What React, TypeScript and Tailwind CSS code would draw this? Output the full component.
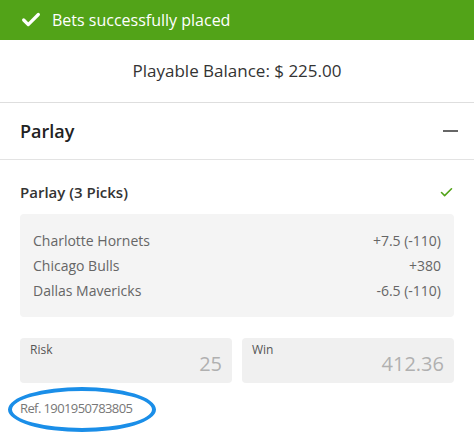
import { Check } from 'lucide-react'

const picks = [
  { team: 'Charlotte Hornets', line: '+7.5 (-110)' },
  { team: 'Chicago Bulls', line: '+380' },
  { team: 'Dallas Mavericks', line: '-6.5 (-110)' },
]

function AmountBox({ label, value }: { label: string; value: string }) {
  return (
    <div className="flex h-[45px] flex-1 flex-col rounded bg-[#f0f0f0] px-[10px] pt-[5px]">
      <span className="text-[12px] leading-[14px] text-[#555]">{label}</span>
      <span className="-mt-[5px] text-right text-[20px] leading-[24px] text-[#b0b0b0]">{value}</span>
    </div>
  )
}

export default function App() {
  return (
    <div className="h-[441px] w-[474px] overflow-hidden bg-white font-['Open_Sans',sans-serif]">
      <div className="flex h-10 items-center gap-[10px] bg-[#52a318] pl-[20px] text-white">
        <Check className="h-[22px] w-[22px]" strokeWidth={3.5} />
        <span className="text-[16px]">Bets successfully placed</span>
      </div>

      <div className="flex h-[63px] items-center justify-center border-b border-[#dedede] text-[17px] text-[#333]">
        Playable Balance: $ 225.00
      </div>

      <div className="flex h-[57px] items-center justify-between border-b border-[#e3e3e3] pl-[20px] pr-[16px]">
        <span className="text-[18px] font-semibold text-[#222]">Parlay</span>
        <span className="h-[2px] w-[15px] bg-[#666]" />
      </div>

      <div className="px-[20px]">
        <div className="flex h-[54px] items-center justify-between pt-[10px]">
          <span className="text-[15px] font-semibold text-[#333]">Parlay (3 Picks)</span>
          <Check className="h-[15px] w-[15px] text-[#52a318]" strokeWidth={2.5} />
        </div>

        <div className="flex h-[103px] flex-col justify-center rounded bg-[#f4f4f4] px-[13px]">
          {picks.map((p) => (
            <div key={p.team} className="flex h-[25px] items-center justify-between text-[14px] text-[#666]">
              <span>{p.team}</span>
              <span>{p.line}</span>
            </div>
          ))}
        </div>

        <div className="mt-[21px] flex gap-[10px]">
          <AmountBox label="Risk" value="25" />
          <AmountBox label="Win" value="412.36" />
        </div>

        <div className="relative mt-[16px] text-[13px] tracking-[-0.6px] text-[#777]">
          Ref. 1901950783805
          <span className="absolute left-[-12px] top-[-12px] h-[45px] w-[148px] rounded-[50%] border-[4px] border-[#1a8ee8]" />
        </div>
      </div>
    </div>
  )
}
